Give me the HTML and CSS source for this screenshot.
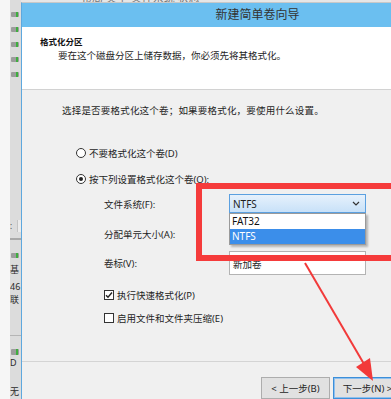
FILE: index.html
```html
<!DOCTYPE html>
<html lang="zh-CN">
<head>
    <meta charset="UTF-8">
    <meta name="viewport" content="width=device-width, initial-scale=1.0">
    <title>新建简单卷向导</title>
    <link rel="stylesheet" href="styles.css">
</head>
<body>

    <div class="screen">
        <!-- disk management window behind the wizard -->
        <div class="side">
            <div class="side-light"></div>
            <div class="side-panel">
                <span class="disk first"></span>
                <span class="disk"></span>
                <span class="disk"></span>
                <span class="disk"></span>
                <span class="disk"></span>
                <div class="stub"><span>:</span><i></i></div>
                <div class="side-line"></div>
                <span class="disk low"></span>
                <span class="side-text t1">基</span>
                <span class="side-text t2">46</span>
                <span class="side-text t3">联</span>
                <div class="side-divider"></div>
                <span class="disk dvd"></span>
                <span class="side-text t4">D</span>
                <span class="side-text t5">无</span>
            </div>
        </div>

        <div class="main">
            <div class="behind-top"><span>布局 类型 文件系统 状态</span></div>

            <div class="wizard">
                <div class="titlebar">新建简单卷向导</div>

                <div class="header">
                    <h1>格式化分区</h1>
                    <p>要在这个磁盘分区上储存数据，你必须先将其格式化。</p>
                </div>

                <div class="content">
                    <p class="intro">选择是否要格式化这个卷；如果要格式化，要使用什么设置。</p>

                    <label class="radio first"><span class="radio-dot"></span>不要格式化这个卷(D)</label>
                    <label class="radio"><span class="radio-dot checked"></span>按下列设置格式化这个卷(O):</label>

                    <div class="fields">
                        <div class="field">
                            <span class="field-label">文件系统(F):</span>
                            <div class="combo open">
                                <span>NTFS</span>
                                <svg class="chevron" width="8" height="5" viewBox="0 0 8 5">
                                    <path d="M1 1 L4 4 L7 1" fill="none" stroke="#333" stroke-width="1.2"/>
                                </svg>
                                <ul class="dropdown">
                                    <li>FAT32</li>
                                    <li class="selected">NTFS</li>
                                </ul>
                            </div>
                        </div>
                        <div class="field alloc">
                            <span class="field-label">分配单元大小(A):</span>
                            <div class="combo"></div>
                        </div>
                        <div class="field volume">
                            <span class="field-label">卷标(V):</span>
                            <div class="textbox">新加卷</div>
                        </div>
                    </div>

                    <label class="check first">
                        <span class="box">
                            <svg width="8" height="8" viewBox="0 0 8 8">
                                <path d="M1 4.2 L3 6.3 L7 1.5" fill="none" stroke="#222" stroke-width="1.4"/>
                            </svg>
                        </span>执行快速格式化(P)
                    </label>
                    <label class="check"><span class="box"></span>启用文件和文件夹压缩(E)</label>
                </div>

                <div class="footer">
                    <button type="button">&lt; 上一步(B)</button>
                    <button type="button" class="default">下一步(N) &gt;</button>
                    <button type="button" class="cancel">取消</button>
                </div>
            </div>
        </div>
    </div>

    <!-- annotation drawn over the screenshot -->
    <div class="red-frame"></div>
    <svg class="arrow" width="391" height="399" viewBox="0 0 391 399">
        <line x1="305" y1="263" x2="364" y2="364" stroke="#f23a3a" stroke-width="2"/>
        <polygon points="373,381 356,367 370,358" fill="#f23a3a"/>
    </svg>

</body>
</html>
```

FILE: styles.css
```css
* {
    box-sizing: border-box;
}

body {
    margin: 0;
    width: 391px;
    height: 399px;
    overflow: hidden;
    position: relative;
    background-color: #f0f0f0;
    font-family: "Noto Sans", "Noto Sans CJK SC", sans-serif;
    font-size: 9.5px;
    color: #1e1e1e;
}

.screen {
    display: flex;
    height: 399px;
}

/* window behind */
.side {
    display: flex;
    flex: none;
    width: 21px;
}

.side-light {
    width: 10px;
    background-color: #f6f6f6;
}

.side-panel {
    width: 11px;
    background-color: #dcdcdc;
    display: flex;
    flex-direction: column;
    overflow: hidden;
}

.disk {
    display: block;
    flex: none;
    width: 8px;
    height: 5px;
    margin-top: 10px;
    margin-left: 1px;
    border-radius: 1px;
    background: linear-gradient(90deg, #9c9c9c 0 5px, #3fae3f 5px 7px, #9c9c9c 7px);
}

.disk.first {
    margin-top: 12px;
}

.disk.low {
    margin-top: 13px;
}

.disk.dvd {
    margin-top: 13px;
    height: 6px;
}

.stub {
    display: flex;
    justify-content: space-between;
    margin-top: 143px;
    height: 12px;
    font-size: 8px;
    line-height: 12px;
    color: #444;
}

.stub i {
    width: 4px;
    background-color: #ececec;
    border-left: 1px solid #c4c4c4;
}

.side-line {
    height: 2px;
    margin-top: 6px;
    background-color: #a9a9a9;
}

.side-text {
    display: block;
    white-space: nowrap;
    font-size: 9px;
    line-height: 11px;
    color: #2a2a2a;
}

.side-text.t1 { margin-top: 6px; }
.side-text.t2 { margin-top: 6px; }
.side-text.t3 { margin-top: 2px; }
.side-text.t4 { margin-top: 2px; }
.side-text.t5 { margin-top: 18px; }

.side-divider {
    height: 1px;
    margin-top: 30px;
    background-color: #b5b5b5;
}

.main {
    flex: none;
    width: 472px;
    display: flex;
    flex-direction: column;
}

.behind-top {
    height: 3px;
    overflow: hidden;
    background-color: #e6e6e6;
}

.behind-top span {
    display: block;
    margin-top: -8px;
    padding-left: 60px;
    font-size: 11px;
    line-height: 11px;
    white-space: nowrap;
    color: #777;
}

/* wizard */
.wizard {
    flex: 1;
    display: flex;
    flex-direction: column;
    border-left: 1px solid #5ea8de;
    border-top: 1px solid #c8c8c8;
    background-color: #f0f0f0;
}

.titlebar {
    height: 24px;
    line-height: 24px;
    text-align: center;
    background-color: #6bbff0;
    font-size: 12px;
    color: #333;
}

.header {
    height: 63px;
    padding: 9px 0 0 18px;
    background-color: #fff;
    border-bottom: 1px solid #d2d2d2;
}

.header h1 {
    margin: 0;
    font-size: 8.5px;
    line-height: 12px;
    font-weight: bold;
    color: #111;
}

.header p {
    margin: 2px 0 0 18px;
    line-height: 12px;
}

.content {
    height: 271px;
    padding: 15px 0 0 40px;
}

.intro {
    margin: 0;
    line-height: 12px;
    letter-spacing: 0.2px;
}

.radio {
    display: flex;
    align-items: center;
    gap: 3px;
    height: 12px;
    margin: 14px 0 0 14px;
}

.radio.first {
    margin-top: 30px;
}

.radio-dot {
    width: 10px;
    height: 10px;
    border: 1px solid #333;
    border-radius: 50%;
    background-color: #fff;
    display: flex;
    align-items: center;
    justify-content: center;
}

.radio-dot.checked::after {
    content: "";
    width: 4px;
    height: 4px;
    border-radius: 50%;
    background-color: #222;
}

.fields {
    margin: 9px 0 0 42px;
}

.field {
    display: flex;
    align-items: center;
    height: 19px;
}

.field.alloc {
    margin-top: 11px;
}

.field.volume {
    margin-top: 8px;
    height: 24px;
}

.field-label {
    width: 125px;
}

.combo {
    position: relative;
    display: flex;
    align-items: center;
    width: 137px;
    height: 19px;
    padding-left: 3px;
    border: 1px solid #acacac;
    background: linear-gradient(#f2f2f2, #e3e3e3);
    font-size: 10px;
}

.combo.open {
    z-index: 2;
    border-color: #5ba0e0;
    background: linear-gradient(#e6f1fc, #c8e1f8);
}

.chevron {
    margin-left: auto;
    margin-right: 5px;
}

.dropdown {
    position: absolute;
    top: 18px;
    left: -1px;
    width: 137px;
    margin: 0;
    padding: 0;
    list-style: none;
    background-color: #fff;
    border: 1px solid #9a9a9a;
    box-shadow: 2px 2px 2px rgba(0, 0, 0, 0.25);
}

.dropdown li {
    height: 15px;
    line-height: 15px;
    padding-left: 2px;
    color: #111;
}

.dropdown li.selected {
    background-color: #3b8eea;
    color: #fff;
}

.textbox {
    width: 137px;
    height: 24px;
    padding: 5px 0 0 3px;
    border: 1px solid #b3b3b3;
    background-color: #fff;
}

.check {
    display: flex;
    align-items: center;
    gap: 3px;
    height: 12px;
    margin: 11px 0 0 42px;
}

.check.first {
    margin-top: 14px;
}

.box {
    width: 10px;
    height: 10px;
    border: 1px solid #333;
    background-color: #fff;
    display: flex;
    align-items: center;
    justify-content: center;
}

.footer {
    flex: 1;
    display: flex;
    align-items: flex-start;
    gap: 3px;
    padding: 15px 0 0 239px;
    border-top: 1px solid #d4d4d4;
}

button {
    width: 69px;
    height: 22px;
    padding: 0;
    border: 1px solid #adadad;
    background-color: #e1e1e1;
    font-family: "Noto Sans", "Noto Sans CJK SC", sans-serif;
    font-size: 9.5px;
    color: #1e1e1e;
}

button.default {
    border-color: #3c8fd9;
    box-shadow: inset 0 0 0 1px #8fc0ee;
}

button.cancel {
    margin-left: 7px;
}

/* annotation */
.red-frame {
    position: absolute;
    left: 196px;
    top: 183px;
    width: 230px;
    height: 78px;
    border: 6.5px solid #f53b3b;
    z-index: 5;
}

.arrow {
    position: absolute;
    left: 0;
    top: 0;
    z-index: 6;
    pointer-events: none;
}
```
